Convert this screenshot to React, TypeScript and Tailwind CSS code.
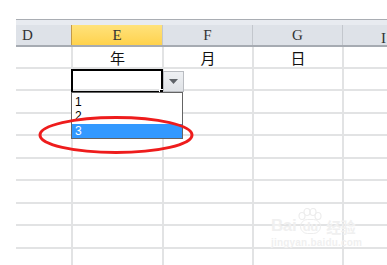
import React from "react";

const cols = [
  { key: "D", w: "w-[55px]" },
  { key: "E", w: "w-[91px]" },
  { key: "F", w: "w-[90px]" },
  { key: "G", w: "w-[90px]" },
  { key: "H", w: "flex-1" },
];

const rowHeights = ["h-[22px]", "h-[22px]", "h-[23px]", "h-[22px]", "h-[23px]", "h-[22px]", "h-[23px]", "h-[22px]", "h-[23px]", "h-[22px]"];

const firstRow: Record<string, string> = { E: "年", F: "月", G: "日" };

export default function App() {
  return (
    <div className="relative w-[387px] h-[265px] overflow-hidden bg-white">
      {/* column header band */}
      <div className="h-[19px]" />
      <div className="pl-[16px]">
        <div className="h-[6px] border-t border-[#a9adb3] bg-[#e8ebf0]" />
        <div className="flex h-[22px] border-b-2 border-[#a6abb2] bg-[#dee2e8] font-['Liberation_Serif',serif] text-[15px] text-[#333]">
          {cols.map((c) => (
            <div
              key={c.key}
              className={
                c.key === "E"
                  ? `${c.w} flex items-center justify-center border-l border-[#c39a4a] bg-gradient-to-b from-[#ffe27a] to-[#ffd24c]`
                  : c.key === "D"
                    ? `${c.w} flex items-center pl-[6px]`
                    : `${c.w} flex items-center justify-center border-l border-[#c3c7cd]`
              }
            >
              {c.key === "H" ? "" : c.key}
            </div>
          ))}
        </div>
      </div>

      {/* grid */}
      <div className="flex flex-col">
        {rowHeights.map((h, r) => (
          <div key={r} className={`flex ${h}`}>
            <div className="w-[16px]" />
            {cols.map((c) => (
              <div
                key={c.key}
                className={`${c.w} flex items-center justify-center border-b-2 border-[#e2e3e4] ${c.key === "D" ? "" : "border-l-2 border-l-[#e2e3e4]"} font-['Noto_Sans_CJK_SC',sans-serif] text-[15px] leading-none text-[#111]`}
              >
                {r === 0 ? firstRow[c.key] ?? "" : ""}
              </div>
            ))}
          </div>
        ))}
      </div>

      {/* "H" header letter clipped at right edge */}
      <div className="absolute left-[381px] top-[27px] font-['Liberation_Serif',serif] text-[15px] text-[#333]">I</div>

      {/* active cell */}
      <div className="absolute left-[71px] top-[69px] w-[92px] h-[24px] border-[2px] border-black" />
      <div className="absolute left-[159px] top-[89px] w-[5px] h-[5px] bg-black border border-white" />

      {/* dropdown button */}
      <div className="absolute left-[163px] top-[71px] w-[21px] h-[21px] border border-[#b9bcc1] bg-gradient-to-b from-[#eef0f3] to-[#dfe2e6] flex items-center justify-center">
        <svg width="9" height="5" viewBox="0 0 9 5">
          <path d="M0 0 H9 L4.5 5 Z" fill="#5f6368" />
        </svg>
      </div>

      {/* dropdown list */}
      <div className="absolute left-[71px] top-[92px] w-[112px] h-[47px] border border-[#646464] bg-white pt-[2px] font-['Liberation_Sans',sans-serif] text-[12px] leading-[14px] text-black">
        <div className="h-[14px] pl-[3px]">1</div>
        <div className="h-[14px] pl-[3px]">2</div>
        <div className="h-[14px] pl-[3px] mt-[1px] bg-[#3399ff] text-white">3</div>
      </div>

      {/* red annotation ellipse */}
      <svg className="absolute left-0 top-0" width="387" height="265">
        <ellipse cx="116" cy="135" rx="76" ry="17.5" fill="none" stroke="#ee1c1c" strokeWidth="3" />
      </svg>

      {/* watermark */}
      <div className="absolute left-[271px] top-[208px] flex flex-col items-start text-[#f0f0f0]">
        <div className="flex items-end font-['Liberation_Sans',sans-serif] text-[17px] font-bold leading-none tracking-tight">
          <span>Bai</span>
          <span className="relative mx-[1px] flex flex-col items-center">
            <svg width="26" height="12" viewBox="0 0 26 12" className="mb-[-1px]">
              <ellipse cx="5" cy="8" rx="3" ry="3.5" fill="none" stroke="#ededed" strokeWidth="1.2" />
              <ellipse cx="10" cy="4" rx="3" ry="3.5" fill="none" stroke="#ededed" strokeWidth="1.2" />
              <ellipse cx="16" cy="4" rx="3" ry="3.5" fill="none" stroke="#ededed" strokeWidth="1.2" />
              <ellipse cx="21" cy="8" rx="3" ry="3.5" fill="none" stroke="#ededed" strokeWidth="1.2" />
            </svg>
            <span className="rounded-full border border-[#ededed] px-[2px] text-[13px] leading-[13px]">du</span>
          </span>
          <span className="ml-[2px] font-['Noto_Sans_CJK_SC',sans-serif] text-[15px]">经验</span>
        </div>
        <div className="mt-[4px] font-['Liberation_Sans',sans-serif] text-[10px] font-bold leading-none tracking-[0.2px]">
          jingyan.baidu.com
        </div>
      </div>
    </div>
  );
}
